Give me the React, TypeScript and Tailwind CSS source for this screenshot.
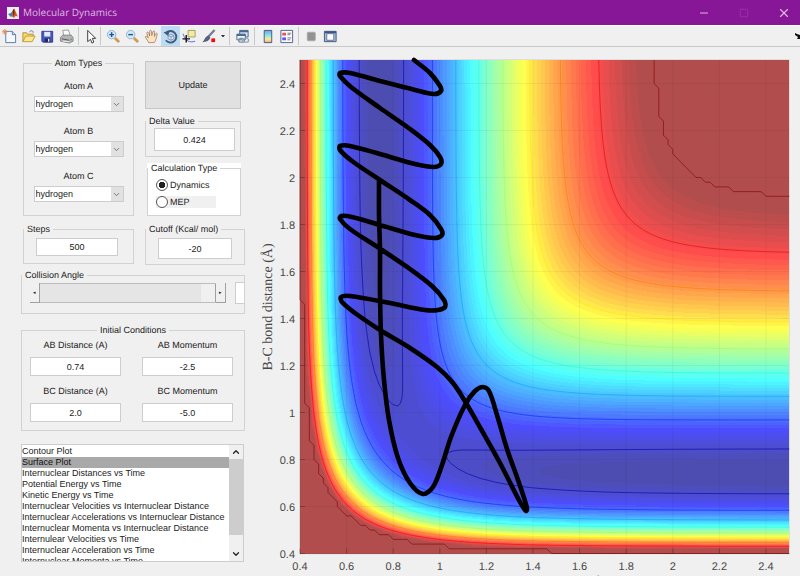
import type { ReactNode } from "react";
import { ChevronDown, ChevronUp, Minus, Square, X } from "lucide-react";
import clsx from "clsx";

// London-Eyring-Polanyi-Sato surface for collinear H + H2, kcal/mol and angstrom
const DISSOCIATION = 103.7;
const BETA = 1.975;
const R_EQ = 0.74;
const SATO = 0.186;
const CUTOFF = -20;

const R_MIN = 0.4;
const CELLS = 105;
const STEP = 0.02;
const BANDS = 64;

const px = (r: number) => 300 + (r - R_MIN) * 233;
const py = (r: number) => 553.5 - (r - R_MIN) * 235;

function potential(ab: number, bc: number) {
  const e = [ab, bc, ab + bc].map((r) => Math.exp(-BETA * (r - R_EQ)));
  const q = e.map((x) => (3 + SATO) * x * x - (2 + 6 * SATO) * x);
  const j = e.map((x) => (1 + 3 * SATO) * x * x - (6 + 2 * SATO) * x);
  const exchange = Math.sqrt(((j[0] - j[1]) ** 2 + (j[1] - j[2]) ** 2 + (j[0] - j[2]) ** 2) / 2);
  return ((DISSOCIATION / 4) * (q[0] + q[1] + q[2] - exchange)) / (1 + SATO);
}

const surface = Array.from({ length: CELLS + 1 }, (_, row) =>
  Array.from({ length: CELLS + 1 }, (_, col) =>
    Math.min(CUTOFF, potential(R_MIN + col * STEP, R_MIN + row * STEP))
  )
);

function jet(t: number, alpha: number) {
  const channel = (center: number) => {
    const v = Math.max(0, Math.min(1, 1.5 - Math.abs(4 * t - center)));
    return Math.round(255 * (v * alpha + 1 - alpha));
  };
  return `rgb(${channel(3)},${channel(2)},${channel(1)})`;
}

type Corner = { x: number; y: number; v: number };

function cellCorners(row: number, col: number): Corner[] {
  return [[0, 0], [0, 1], [1, 1], [1, 0]].map(([dr, dc]) => ({
    x: px(R_MIN + (col + dc) * STEP),
    y: py(R_MIN + (row + dr) * STEP),
    v: surface[row + dr][col + dc],
  }));
}

const cells = Array.from({ length: CELLS }, (_, row) =>
  Array.from({ length: CELLS }, (_, col) => cellCorners(row, col))
);

const fmt = (x: number, y: number) => `${x.toFixed(2)} ${y.toFixed(2)}`;

function crossing(a: Corner, b: Corner, level: number) {
  const t = (level - a.v) / (b.v - a.v);
  return fmt(a.x + (b.x - a.x) * t, a.y + (b.y - a.y) * t);
}

// Area where the surface is above the level
function regionPath(level: number) {
  const parts: string[] = [];
  for (const row of cells) {
    let run: Corner[] | null = null;
    let last: Corner[] = row[0];
    const flush = () => {
      if (run) parts.push(`M${fmt(run[0].x, run[0].y)}L${fmt(last[1].x, last[1].y)}L${fmt(last[2].x, last[2].y)}L${fmt(run[3].x, run[3].y)}Z`);
      run = null;
    };
    for (const cell of row) {
      if (cell.every((c) => c.v >= level)) {
        run = run ?? cell;
        last = cell;
        continue;
      }
      flush();
      const points: string[] = [];
      cell.forEach((a, i) => {
        const b = cell[(i + 1) % 4];
        if (a.v >= level) points.push(fmt(a.x, a.y));
        if (a.v >= level !== b.v >= level) points.push(crossing(a, b, level));
      });
      if (points.length > 2) parts.push(`M${points.join("L")}Z`);
    }
    flush();
  }
  return parts.join("");
}

function contourPath(level: number) {
  const parts: string[] = [];
  cells.flat().forEach((cell) => {
    const points: string[] = [];
    cell.forEach((a, i) => {
      const b = cell[(i + 1) % 4];
      if (a.v >= level !== b.v >= level) points.push(crossing(a, b, level));
    });
    for (let i = 0; i + 1 < points.length; i += 2) parts.push(`M${points[i]}L${points[i + 1]}`);
  });
  return parts.join("");
}

const bands = Array.from({ length: BANDS - 1 }, (_, i) => ({
  color: jet(Math.min(i + 2, BANDS - 1) / BANDS, 0.7),
  d: regionPath(-DISSOCIATION + ((i + 1) * (CUTOFF + DISSOCIATION)) / BANDS),
}));

const contours = [-100, -90, -80, -70, -60, -50, -40, -30, CUTOFF - 0.0001].map((level) => ({
  color: jet((level + DISSOCIATION) / (CUTOFF + DISSOCIATION), 1),
  d: contourPath(level),
}));

const trajectory: [number, number][] = [
  [379, 180], [379, 215], [380, 250], [380, 290], [381, 335], [384, 380], [389, 420], [398, 458], [410, 483],
  [423, 494], [433, 487], [442, 465], [451, 437], [465, 405], [475, 391], [483, 387], [489, 391], [497, 415],
  [507, 449], [518, 480], [527, 508], [526, 511], [520, 502], [500, 463], [481, 429], [466, 403], [453, 383],
  [437, 367], [410, 348], [380, 330], [355, 313], [342, 302], [341, 297], [350, 296], [390, 303], [425, 310],
  [438, 310], [445, 307], [444, 300], [432, 286], [410, 269], [379, 248], [350, 229], [340, 219], [341, 216],
  [352, 217], [380, 225], [415, 235], [434, 238], [442, 235], [441, 229], [430, 215], [410, 200], [380, 180],
  [352, 161], [340, 150], [340, 146], [350, 146], [380, 154], [415, 164], [434, 167], [441, 164], [440, 157],
  [430, 145], [410, 129], [380, 108], [351, 87], [340, 76], [340, 73], [350, 73], [380, 81], [415, 90],
  [434, 94], [441, 91], [440, 86], [430, 73], [414, 60],
];

const distance = (a: [number, number], b: [number, number]) => Math.hypot(a[0] - b[0], a[1] - b[1]);

// Control point next to point i, towards its neighbour on the given side
function handle(i: number, side: 1 | -1) {
  const p = trajectory[i];
  const before = trajectory[Math.max(0, i - 1)];
  const after = trajectory[Math.min(trajectory.length - 1, i + 1)];
  const reach = (side * distance(p, trajectory[i + side])) / (3 * (distance(before, p) + distance(p, after)));
  return fmt(p[0] + (after[0] - before[0]) * reach, p[1] + (after[1] - before[1]) * reach);
}

const trajectoryPath = trajectory
  .map((p, i) => (i === 0 ? `M${fmt(p[0], p[1])}` : `C${handle(i - 1, 1)} ${handle(i, -1)} ${fmt(p[0], p[1])}`))
  .join("");

const ticks = [0.4, 0.6, 0.8, 1, 1.2, 1.4, 1.6, 1.8, 2, 2.2, 2.4];

function ContourPlot() {
  return (
    <svg viewBox="256 47 544 529" className="block w-full" role="img" aria-label="Potential energy contour plot">
      <rect x="299" y="59" width="491" height="495.5" fill="#dedede" />
      <g shapeRendering="crispEdges">
        <rect x="300" y="60" width="489" height="493.5" fill={jet(1 / BANDS, 0.7)} />
        {bands.map((band, i) => (
          <path key={i} d={band.d} fill={band.color} />
        ))}
      </g>
      {contours.map((line, i) => (
        <path key={i} d={line.d} fill="none" stroke={line.color} strokeOpacity="0.6" />
      ))}
      <g stroke="#262626">
        {ticks.map((t) => (
          <g key={t}>
            <path d={`M${px(t)} 60V553.5M300 ${py(t)}H789`} strokeOpacity="0.06" />
            <path d={`M${px(t)} 553.5v-5M300 ${py(t)}h5`} strokeOpacity="0.35" />
          </g>
        ))}
      </g>
      <path d={trajectoryPath} fill="none" stroke="#000" strokeWidth="4.6" strokeLinecap="round" strokeLinejoin="round" />
      <g fill="#484848" fontSize="11" fontFamily="Liberation Sans, sans-serif">
        {ticks.map((t) => (
          <text key={`x${t}`} x={px(t)} y="570" textAnchor="middle">{t}</text>
        ))}
        {ticks.map((t) => (
          <text key={`y${t}`} x="295" y={py(t) + 4} textAnchor="end">{t}</text>
        ))}
      </g>
      <g fill="#484848" fontSize="14" fontFamily="Liberation Serif, serif" textAnchor="middle">
        <text transform="translate(272 307) rotate(-90)">B-C bond distance (Å)</text>
        <text x="544" y="587">A-B bond distance (Å)</text>
      </g>
    </svg>
  );
}

const icons: Record<string, ReactNode> = {
  new: (
    <>
      <path d="M4 2.5h7l3.5 3.5v8.500H4z" fill="#f4f8ff" stroke="#5b77a8" />
      <path d="M11 2.500V6h3.500" fill="#c9d8ee" stroke="#5b77a8" />
      <path d="M3 0v6M0 3h6M1 1l4 4M5 1L1 5" stroke="#e08a4f" />
    </>
  ),
  open: (
    <>
      <path d="M2 13.500V4h4l1 1.500h6V8" fill="#f5d878" stroke="#b8902f" />
      <path d="M9 3c2-2 4-1 4 1" fill="none" stroke="#55739f" />
      <path d="M2 13.500L5 7.500h10l-3 6z" fill="#ffe78f" stroke="#c09a35" />
    </>
  ),
  save: (
    <>
      <path d="M2 2.500h11.500v11.500H3L2 13z" fill="#4858bd" stroke="#2d3a91" />
      <path d="M4.500 3h6.500v5H4.500z" fill="#dfe9f7" />
      <path d="M5 10h6v4H5z" fill="#202b61" />
      <path d="M8.500 10.500h1.500v3H8.500z" fill="#eef" />
    </>
  ),
  print: (
    <>
      <path d="M5 7L4 1.500l6-.5 2 6z" fill="#fafafa" stroke="#999" />
      <path d="M1.500 9L4 6.500h9L15 9v4l-4 2-9.500-2z" fill="#b4b4b4" stroke="#888" />
      <path d="M3 10.500l8 1.500" stroke="#555" />
      <path d="M4 13l7 .5" stroke="#eee" />
      <circle cx="13" cy="11" r="1" fill="#5aa866" />
    </>
  ),
  pointer: <path d="M5 1.500v12l3-2.500 1.500 4 2-1L10 10h3.500z" fill="#fff" stroke="#333" />,
  zoomIn: (
    <>
      <path d="M9.500 9.500l4.500 4.500" stroke="#d19a52" strokeWidth="3" />
      <circle cx="6" cy="6" r="4.500" fill="#cfeaf6" stroke="#8fb4d0" />
      <path d="M6 3.500v5M3.500 6h5" stroke="#254e9d" strokeWidth="1.500" />
    </>
  ),
  zoomOut: (
    <>
      <path d="M9.500 9.500l4.500 4.500" stroke="#d19a52" strokeWidth="3" />
      <circle cx="6" cy="6" r="4.500" fill="#cfeaf6" stroke="#8fb4d0" />
      <path d="M3.500 6h5" stroke="#254e9d" strokeWidth="1.500" />
    </>
  ),
  pan: (
    <path d="M5 14.500C4 12 1 9 1.500 8s2 0 3 1.500L3 4.500c0-1.500 1.500-1.500 2 0l1 3V2.500c0-1.500 1.800-1.500 2 0l.3 4.500L9.500 3c.3-1.500 2-1.200 1.800.3L11 8l1.500-3c.6-1 2-.6 1.500 1-1 3-1 6-3 8.500z" fill="#fde3c4" stroke="#97755c" strokeWidth=".8" />
  ),
  rotate: (
    <>
      <path d="M3.500 4A6.200 6.200 0 1 1 3 12" fill="none" stroke="#43597a" strokeWidth="2" />
      <path d="M.5 3.500l5 4L7 2z" fill="#43597a" />
      <path d="M5.500 7l3-1.500 3 1.500v3.500l-3 1.500-3-1.500zM5.500 7l3 1.500L11.500 7M8.500 8.500V12" fill="#dce9f5" stroke="#6f86a7" strokeWidth=".8" />
    </>
  ),
  cursor: (
    <>
      <path d="M1 5c3 8 7 10 13 8" fill="none" stroke="#5b63df" />
      <path d="M6.500 1.500H14v7H6.500z" fill="#f0eaa2" stroke="#a39c62" />
      <path d="M4.500 6.500v8M.5 10.500h8" stroke="#111" strokeWidth="1.500" />
    </>
  ),
  brush: (
    <>
      <path d="M14.500 1L8 8" stroke="#6f7e99" strokeWidth="2.500" />
      <path d="M8 7l2 2c-1 3-4 5-8.500 5C4 12 4 8 8 7z" fill="#53627d" />
      <path d="M11 10h4v4h-4z" fill="#f00c0c" />
    </>
  ),
  link: (
    <>
      <path d="M5 1.500h9v7H5z" fill="#d9e4f3" stroke="#4a658f" />
      <path d="M5 2.500h9" stroke="#4a658f" strokeWidth="2" />
      <path d="M2 5.500h9v6H2z" fill="#f3f7fc" stroke="#4a658f" />
      <path d="M2 6.500h9" stroke="#4a658f" strokeWidth="2" />
      <rect x="4" y="10" width="6" height="4" rx="2" fill="none" stroke="#7c8fa6" strokeWidth="1.500" />
      <rect x="8" y="10" width="6.500" height="4" rx="2" fill="none" stroke="#9aabbb" strokeWidth="1.500" />
    </>
  ),
  colorbar: (
    <>
      <defs>
        <linearGradient id="bar" x2="0" y2="1">
          <stop stopColor="#7d9cf0" />
          <stop offset=".4" stopColor="#83e4ea" />
          <stop offset=".7" stopColor="#f5ee95" />
          <stop offset="1" stopColor="#f7a793" />
        </linearGradient>
      </defs>
      <path d="M4.500 1.500h8v13h-8z" fill="url(#bar)" stroke="#44567f" />
    </>
  ),
  legend: (
    <>
      <path d="M2 1.500h12.500v13H2z" fill="#fafaff" stroke="#4a5f96" />
      <path d="M3.500 4h4v3h-4z" fill="#ee5252" />
      <path d="M3.500 9h4v3h-4z" fill="#5959ec" />
      <path d="M9 4.500h4M9 6h3M9 9.500h4M9 11.500h3" stroke="#777" />
    </>
  ),
  hide: <rect x="3.500" y="3.500" width="8.500" height="9" rx="1" fill="#929292" stroke="#aaa" />,
  dock: (
    <>
      <path d="M1.500 2.500h12.500v11H1.500z" fill="#a9bad8" stroke="#3e5584" />
      <path d="M2 3.500h12" stroke="#3e5584" strokeWidth="2" />
      <path d="M4 5h7.500v7H4z" fill="#fff" stroke="#5e739c" />
    </>
  ),
};

function ToolButton({ name, label, active, narrow }: { name: string; label: string; active?: boolean; narrow?: boolean }) {
  return (
    <button
      aria-label={label}
      className={clsx("flex h-5 shrink-0 items-center justify-center", narrow ? "w-4" : "w-[19px]", active && "bg-[#bcdcf4]")}
    >
      <svg viewBox="0 0 16 16" className="size-[15px]">{icons[name]}</svg>
    </button>
  );
}

const Divider = () => <div className="mx-[2px] h-[18px] w-[2px] border-l border-[#c8c8c8]" />;

function TitleBar() {
  return (
    <header className="flex h-[25px] items-center overflow-hidden bg-[#881797] pl-[7px] text-[#dcb9e0]">
      <svg viewBox="0 0 12 12" className="size-3">
        <path d="M0 0h12v12H0z" fill="#eef1f3" />
        <path d="M1 7l3-1 2-3 1 4-3 3z" fill="#3c82b5" />
        <path d="M6 3c1-2 1.500-2 2 0l3 7c-2-2-3-1-4 1L4.500 9z" fill="#d55b26" />
        <path d="M6 3l1-1 .5 5L6 9z" fill="#6e2419" />
      </svg>
      <h1 className="ml-1 flex-1 font-['Open_Sans',sans-serif] text-[10px]">Molecular Dynamics</h1>
      <button aria-label="Minimize" className="flex w-10 justify-center"><Minus className="size-3" strokeWidth={2} /></button>
      <button aria-label="Maximize" className="flex w-10 justify-center text-[#9c33aa]"><Square className="size-[10px]" strokeWidth={2} /></button>
      <button aria-label="Close" className="-mr-1 flex w-10 justify-center"><X className="size-[14px]" strokeWidth={2} /></button>
    </header>
  );
}

function Toolbar() {
  return (
    <nav className="flex h-[22px] items-center border-t border-b border-t-white border-b-[#c8c8c8]">
      <ToolButton name="new" label="New Figure" />
      <ToolButton name="open" label="Open File" />
      <ToolButton name="save" label="Save Figure" />
      <ToolButton name="print" label="Print Figure" />
      <Divider />
      <ToolButton name="pointer" label="Edit Plot" narrow />
      <Divider />
      <ToolButton name="zoomIn" label="Zoom In" />
      <ToolButton name="zoomOut" label="Zoom Out" />
      <ToolButton name="pan" label="Pan" />
      <ToolButton name="rotate" label="Rotate 3D" active />
      <ToolButton name="cursor" label="Data Cursor" />
      <ToolButton name="brush" label="Brush" />
      <button aria-label="Brush options" className="flex w-[9px] justify-center">
        <svg viewBox="0 0 6 4" className="w-1"><path d="M0 0h6L3 4z" fill="#333" /></svg>
      </button>
      <Divider />
      <ToolButton name="link" label="Link Plot" />
      <Divider />
      <ToolButton name="colorbar" label="Insert Colorbar" />
      <ToolButton name="legend" label="Insert Legend" />
      <Divider />
      <ToolButton name="hide" label="Hide Plot Tools" />
      <ToolButton name="dock" label="Show Plot Tools" />
      <button aria-label="Dock Figure" className="ml-auto">
        <svg viewBox="0 0 5 6" className="h-[6px] w-[5px]"><path d="M0 0l2 1 3 1v4H2l1-2-3-2z" fill="#111" /></svg>
      </button>
    </nav>
  );
}

function Group({ title, className, legendClass, children }: { title: string; className?: string; legendClass?: string; children: ReactNode }) {
  return (
    <fieldset className={clsx("min-w-0 border border-[#d2d2d2]", className)}>
      <legend className={clsx("px-[3px]", legendClass)}>{title}</legend>
      {children}
    </fieldset>
  );
}

function AtomSelect({ name }: { name: string }) {
  return (
    <label className="flex flex-col items-center gap-1">
      {name}
      <span className="relative flex w-[90px]">
        <select className="h-4 w-full appearance-none border border-[#cdcdcd] bg-white pl-px">
          <option>hydrogen</option>
          <option>deuterium</option>
          <option>tritium</option>
        </select>
        <span className="pointer-events-none absolute inset-y-px right-px flex w-3 items-center justify-center bg-[#e1e1e1]">
          <ChevronDown className="size-[9px] text-[#555]" />
        </span>
      </span>
    </label>
  );
}

const inputClass = "border border-[#cdcdcd] bg-white text-center";

function ConditionField({ label, value }: { label: string; value: string }) {
  return (
    <label className="flex w-[91px] flex-col items-center gap-[6px]">
      {label}
      <input defaultValue={value} className={clsx(inputClass, "h-[19px] w-full")} />
    </label>
  );
}

const plots = [
  "Contour Plot",
  "Surface Plot",
  "Internuclear Distances vs Time",
  "Potential Energy vs Time",
  "Kinetic Energy vs Time",
  "Internuclear Velocities vs Internuclear Distance",
  "Internuclear Accelerations vs Internuclear Distance",
  "Internuclear Momenta vs Internuclear Distance",
  "Internulear Velocities vs Time",
  "Internuclear Acceleration vs Time",
  "Internuclear Momenta vs Time",
];

function PlotList() {
  return (
    <div className="mt-[13px] mr-px flex h-[118px] border border-[#cdcdcd] bg-white">
      <select
        size={10}
        aria-label="Plot type"
        defaultValue="Surface Plot"
        className="h-full min-w-0 flex-1 overflow-hidden pt-px [scrollbar-width:none]"
      >
        {plots.map((plot) => (
          <option key={plot} className="h-[11px] min-h-0 p-0 leading-[11px] checked:bg-[#a9a9a9] checked:bg-[linear-gradient(#a9a9a9,#a9a9a9)]">
            {plot}
          </option>
        ))}
      </select>
      <div className="flex w-[14px] flex-col bg-[#f0f0f0]">
        <button aria-label="Scroll up" className="flex h-[14px] items-center justify-center"><ChevronUp className="size-[10px]" strokeWidth={3} /></button>
        <div className="h-[76px] bg-[#cdcdcd]" />
        <button aria-label="Scroll down" className="mt-auto flex h-[14px] items-center justify-center"><ChevronDown className="size-[10px]" strokeWidth={3} /></button>
      </div>
    </div>
  );
}

const radioClass = "size-3 appearance-none rounded-full border border-[#555] bg-white checked:bg-[radial-gradient(circle,#222_3px,transparent_3px)]";

function ControlPanel() {
  return (
    <aside className="w-64 shrink-0 pt-[11px] pr-[11px] pl-[21px]">
      <div className="flex gap-[11px] pl-[2px]">
        <div className="flex w-[111px] shrink-0 flex-col gap-2">
          <Group title="Atom Types" legendClass="mx-auto">
            <div className="flex flex-col gap-[14px] pt-3 pb-[13px]">
              <AtomSelect name="Atom A" />
              <AtomSelect name="Atom B" />
              <AtomSelect name="Atom C" />
            </div>
          </Group>
          <Group title="Steps" className="px-3 pb-[7px]" legendClass="-ml-3">
            <input aria-label="Steps" defaultValue="500" className={clsx(inputClass, "mt-[3px] h-[18px] w-[82px]")} />
          </Group>
        </div>
        <div className="flex min-w-0 flex-1 flex-col pt-[3px]">
          <button className="mr-1 h-12 border border-[#c6c6c6] bg-[#e1e1e1]">Update</button>
          <Group title="Delta Value" className="mt-[7px] mr-1 px-2 pb-[5px]" legendClass="-ml-2">
            <input aria-label="Delta Value" defaultValue="0.424" className={clsx(inputClass, "mt-px h-[23px] w-[81px]")} />
          </Group>
          <div className="mt-[6px] mr-1 ml-[2px] bg-white">
            <Group title="Calculation Type" className="pb-[7px] pl-2" legendClass="-ml-2">
              <label className="mt-[5px] flex h-3 items-center gap-[2px]">
                <input type="radio" name="calculation" defaultChecked className={radioClass} />
                Dynamics
              </label>
              <label className="mt-[5px] flex h-3 w-[60px] items-center gap-[2px] bg-[#f0f0f0]">
                <input type="radio" name="calculation" className={radioClass} />
                MEP
              </label>
            </Group>
          </div>
          <Group title="Cutoff (Kcal/ mol)" className="mt-[8px] px-3 pb-[5px]" legendClass="-ml-3">
            <input aria-label="Cutoff (Kcal/ mol)" defaultValue="-20" className={clsx(inputClass, "mt-[3px] h-[21px] w-[76px] max-w-full")} />
          </Group>
        </div>
      </div>

      <Group title="Collision Angle" className="mt-[5px] pb-[9px] pl-2" legendClass="-ml-2">
        <div className="mt-px flex items-center">
          <button aria-label="Decrease angle" className="flex h-5 w-[10px] items-center justify-center border-r border-b border-[#a0a0a0] text-[5px]">◂</button>
          <input
            type="range"
            aria-label="Collision Angle"
            min="0"
            max="180"
            defaultValue="180"
            className="h-5 min-w-0 flex-1 appearance-none border-y border-[#bdbdbd] bg-[#e5e5e5] [&::-webkit-slider-thumb]:h-[18px] [&::-webkit-slider-thumb]:w-[15px] [&::-webkit-slider-thumb]:appearance-none [&::-webkit-slider-thumb]:border-r [&::-webkit-slider-thumb]:border-[#a0a0a0] [&::-webkit-slider-thumb]:bg-[#f0f0f0]"
          />
          <button aria-label="Increase angle" className="flex h-5 w-[10px] items-center justify-center border-r border-b border-[#a0a0a0] text-[5px]">▸</button>
          <input aria-label="Angle value" className="ml-[9px] h-[22px] w-[9px] border border-r-0 border-[#cdcdcd] bg-white" />
        </div>
      </Group>

      <Group title="Initial Conditions" className="mt-[11px] px-2 pb-2" legendClass="mx-auto">
        <div className="mt-1 flex flex-col gap-[10px]">
          <div className="flex justify-between pr-[3px]">
            <ConditionField label="AB Distance (A)" value="0.74" />
            <ConditionField label="AB Momentum" value="-2.5" />
          </div>
          <div className="flex justify-between pr-[3px]">
            <ConditionField label="BC Distance (A)" value="2.0" />
            <ConditionField label="BC Momentum" value="-5.0" />
          </div>
        </div>
      </Group>

      <PlotList />
    </aside>
  );
}

export default function App() {
  return (
    <div className="min-h-screen bg-[#f0f0f0] font-['Liberation_Sans',sans-serif] text-[9px] leading-[11px] text-[#222] [text-rendering:geometricPrecision]">
      <TitleBar />
      <Toolbar />
      <main className="flex items-start">
        <ControlPanel />
        <div className="min-w-0 flex-1">
          <ContourPlot />
        </div>
      </main>
    </div>
  );
}
